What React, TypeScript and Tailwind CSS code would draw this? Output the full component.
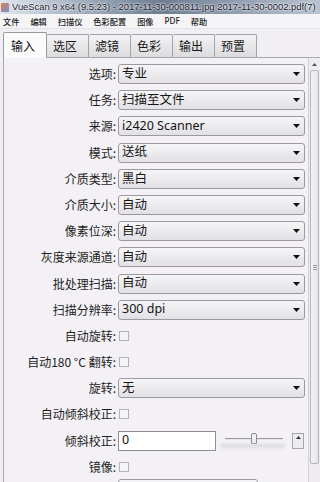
import React from "react";

const FONT = { fontFamily: '"Noto Sans", "Noto Sans CJK SC", sans-serif' };
const CJK = { fontFamily: '"Noto Sans CJK SC", "Noto Sans", sans-serif' };

type Row =
  | { kind: "select"; label: string; value: string }
  | { kind: "check"; label: string }
  | { kind: "skew"; label: string; value: string };

const rows: Row[] = [
  { kind: "select", label: "选项:", value: "专业" },
  { kind: "select", label: "任务:", value: "扫描至文件" },
  { kind: "select", label: "来源:", value: "i2420 Scanner" },
  { kind: "select", label: "模式:", value: "送纸" },
  { kind: "select", label: "介质类型:", value: "黑白" },
  { kind: "select", label: "介质大小:", value: "自动" },
  { kind: "select", label: "像素位深:", value: "自动" },
  { kind: "select", label: "灰度来源通道:", value: "自动" },
  { kind: "select", label: "批处理扫描:", value: "自动" },
  { kind: "select", label: "扫描分辨率:", value: "300 dpi" },
  { kind: "check", label: "自动旋转:" },
  { kind: "check", label: "自动180 °C 翻转:" },
  { kind: "select", label: "旋转:", value: "无" },
  { kind: "check", label: "自动倾斜校正:" },
  { kind: "skew", label: "倾斜校正:", value: "0" },
  { kind: "check", label: "镜像:" },
];

function Arrow() {
  return (
    <svg width="7" height="4" viewBox="0 0 7 4" className="shrink-0">
      <path d="M0 0 L7 0 L3.5 4 Z" fill="#111" />
    </svg>
  );
}

function Select({ value }: { value: string }) {
  return (
    <div className="flex-1 h-[20px] flex items-center justify-between rounded-[3px] border border-[#9c9a9e] bg-gradient-to-b from-[#f6f5f7] to-[#e2e0e4] pl-[3px] pr-[4px]">
      <span className="text-[12.5px] leading-none text-[#151515]" style={FONT}>
        {value}
      </span>
      <Arrow />
    </div>
  );
}

function Check() {
  return <div className="w-[10px] h-[10px] border border-[#b4b2b6] bg-[#f4f3f5] ml-[1px]" />;
}

export default function App() {
  const tabs = ["输入", "选区", "滤镜", "色彩", "输出", "预置"];
  const menus = ["文件", "编辑", "扫描仪", "色彩配置", "图像", "PDF", "帮助"];
  return (
    <div className="w-[320px] h-[482px] overflow-hidden flex flex-col bg-[#f0eef2]" style={FONT}>
      {/* title bar */}
      <div className="h-[14px] flex items-center bg-gradient-to-r from-[#dfe6ee] via-[#6e7d92] to-[#b9c3cf] relative">
        <div className="w-[8px] h-[9px] ml-[1px] mr-[3px] bg-gradient-to-br from-[#e07a3a] to-[#6a8fd0] rounded-[1px] shrink-0" />
        <span
          className="text-[9.4px] leading-none whitespace-nowrap text-[#1c2230]"
          style={{ fontFamily: '"Liberation Sans", Arial, sans-serif', textShadow: "0 0 3px #ffffff, 0 0 2px #ffffff" }}
        >
          VueScan 9 x64 (9.5.23) - 2017-11-30-000811.jpg 2017-11-30-0002.pdf(7)
        </span>
      </div>
      {/* menu bar */}
      <div className="h-[15px] flex items-center pl-[3px] gap-[11px] bg-[#f5f4f6] border-b border-[#e4e3e6]">
        {menus.map((m) => (
          <span key={m} className="text-[8.2px] leading-none text-[#1a1a1a] font-medium" style={m === "PDF" ? FONT : CJK}>
            {m}
          </span>
        ))}
      </div>
      {/* tab strip */}
      <div className="h-[28px] flex items-end pl-[3px] bg-[#f1eff3]">
        {tabs.map((t, i) =>
          i === 0 ? (
            <div
              key={t}
              className="w-[44px] h-[26px] border border-b-0 border-[#9a9a9e] bg-[#fbfbfc] flex items-center pl-[7px] relative z-10 -mb-[1px] rounded-t-[2px]"
            >
              <span className="text-[12px] leading-none text-[#111]" style={CJK}>
                {t}
              </span>
            </div>
          ) : (
            <div
              key={t}
              className="w-[42px] h-[23px] border border-l-0 border-b-0 border-[#a3a2a7] bg-gradient-to-b from-[#f3f3f4] to-[#dcdbde] flex items-center pl-[6px] rounded-t-[2px]"
            >
              <span className="text-[12px] leading-none text-[#1a1a1a]" style={CJK}>
                {t}
              </span>
            </div>
          )
        )}
      </div>
      {/* panel */}
      <div className="flex-1 flex ml-[3px] border-l border-t border-[#a9a8ad] bg-[#f3f1f5] min-h-0">
        <div className="flex-1 flex flex-col pt-[6px] gap-[6.2px] pr-[3px]">
          {rows.map((r) => (
            <div key={r.label} className="h-[20px] flex items-center shrink-0">
              <div className="w-[114px] text-right pr-[2px] text-[12px] leading-none text-[#1e1e1e] whitespace-nowrap" style={CJK}>
                {r.label}
              </div>
              {r.kind === "select" && <Select value={r.value} />}
              {r.kind === "check" && <Check />}
              {r.kind === "skew" && (
                <div className="flex-1 flex items-center">
                  <div className="w-[98px] h-[20px] border border-[#8f8d92] bg-white flex items-center pl-[3px]">
                    <span className="text-[12.5px] leading-none text-[#111]" style={FONT}>
                      {r.value}
                    </span>
                  </div>
                  <div className="relative w-[64px] h-[20px] ml-[5px]">
                    <div className="absolute left-[4px] right-[2px] top-[7px] h-[2px] border-t border-[#9c9aa0] bg-[#e6e4e8]" />
                    <div className="absolute left-[30px] top-[2px] w-[6px] h-[11px] rounded-t-[2px] border border-[#8d8b90] bg-[#f0eff1]" />
                    <div className="absolute left-[0px] right-[0px] top-[13px] h-[6px] bg-gradient-to-b from-[#d9d7db] to-transparent blur-[1px]" />
                  </div>
                  <div className="ml-[7px] w-[12px] h-[16px] border border-[#a8a6ab] bg-[#ecebee] flex flex-col items-center pt-[2px]">
                    <svg width="5" height="3" viewBox="0 0 5 3">
                      <path d="M0 3 L5 3 L2.5 0 Z" fill="#333" />
                    </svg>
                  </div>
                </div>
              )}
            </div>
          ))}
          <div className="h-[20px] flex items-center shrink-0 -mt-[4px]">
            <div className="w-[114px]" />
            <div className="w-[140px] h-[20px] rounded-[3px] border border-[#9c9a9e] bg-gradient-to-b from-[#f6f5f7] to-[#e2e0e4]" />
          </div>
        </div>
        {/* scrollbar */}
        <div className="w-[12px] flex flex-col items-center bg-[#eeecf0] border-l border-[#d4d2d6]">
          <svg width="5" height="3" viewBox="0 0 5 3" className="mt-[5px]">
            <path d="M0 3 L5 3 L2.5 0 Z" fill="#555" />
          </svg>
          <div className="mt-[4px] w-[9px] h-[394px] border border-[#b8b6bb] rounded-[2px] bg-gradient-to-r from-[#f4f3f5] to-[#e6e4e8] flex flex-col items-center justify-center gap-[1px]">
            <div className="w-[4px] h-[1px] bg-[#9a989d]" />
            <div className="w-[4px] h-[1px] bg-[#9a989d]" />
            <div className="w-[4px] h-[1px] bg-[#9a989d]" />
          </div>
        </div>
      </div>
    </div>
  );
}
